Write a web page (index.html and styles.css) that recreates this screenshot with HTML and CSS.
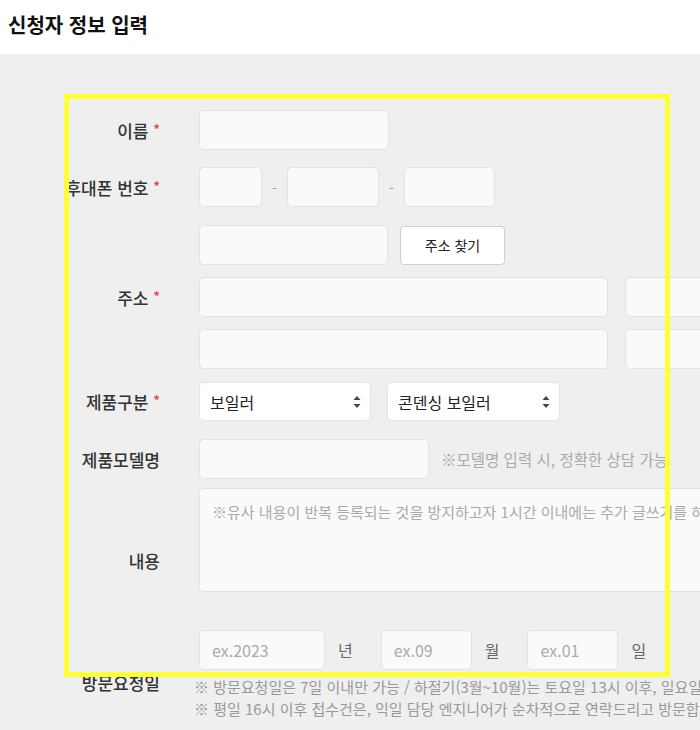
FILE: index.html
```html
<!DOCTYPE html>
<html lang="ko">
<head>
    <meta charset="UTF-8">
    <meta name="viewport" content="width=device-width, initial-scale=1.0">
    <title>신청자 정보 입력</title>
    <link rel="stylesheet" href="styles.css">
</head>
<body>

<div class="page-head">
    <h1>신청자 정보 입력</h1>
</div>

<div class="form-area">
    <div class="form">
        <div class="row row-name">
            <label>이름 <span class="req">*</span></label>
            <div class="field"><input type="text" class="w-name"></div>
        </div>

        <div class="row row-phone">
            <label>후대폰 번호 <span class="req">*</span></label>
            <div class="field">
                <input type="text" class="w-p1">
                <span class="dash">-</span>
                <input type="text" class="w-p2">
                <span class="dash">-</span>
                <input type="text" class="w-p3">
            </div>
        </div>

        <div class="row row-addr">
            <label>주소 <span class="req">*</span></label>
            <div class="field stack">
                <div class="line">
                    <input type="text" class="w-zip">
                    <button type="button" class="btn-find">주소 찾기</button>
                </div>
                <div class="line">
                    <input type="text" class="w-addr">
                    <input type="text" class="w-addr2">
                </div>
                <div class="line">
                    <input type="text" class="w-addr">
                    <input type="text" class="w-addr2">
                </div>
            </div>
        </div>

        <div class="row row-kind">
            <label>제품구분 <span class="req">*</span></label>
            <div class="field">
                <div class="select w-sel1">
                    <span>보일러</span>
                    <svg width="8" height="14" viewBox="0 0 8 14"><path d="M4 1 L7.5 5 H0.5 Z M4 13 L0.5 9 H7.5 Z" fill="#444"/></svg>
                </div>
                <div class="select w-sel2">
                    <span>콘덴싱 보일러</span>
                    <svg width="8" height="14" viewBox="0 0 8 14"><path d="M4 1 L7.5 5 H0.5 Z M4 13 L0.5 9 H7.5 Z" fill="#444"/></svg>
                </div>
            </div>
        </div>

        <div class="row row-model">
            <label>제품모델명</label>
            <div class="field">
                <input type="text" class="w-model">
                <span class="hint">※모델명 입력 시, 정확한 상담 가능</span>
            </div>
        </div>

        <div class="row row-text">
            <label class="lbl-text">내용</label>
            <div class="field">
                <textarea placeholder="※유사 내용이 반복 등록되는 것을 방지하고자 1시간 이내에는 추가 글쓰기를 하실 수 없습니다."></textarea>
            </div>
        </div>

        <div class="row row-date">
            <label class="lbl-date">방문요청일</label>
            <div class="field stack">
                <div class="line date-line">
                    <input type="text" class="w-year" placeholder="ex.2023">
                    <span class="unit">년</span>
                    <input type="text" class="w-md" placeholder="ex.09">
                    <span class="unit">월</span>
                    <input type="text" class="w-md" placeholder="ex.01">
                    <span class="unit">일</span>
                </div>
                <p class="notes">
                    ※ 방문요청일은 7일 이내만 가능 / 하절기(3월~10월)는 토요일 13시 이후, 일요일 및 공휴일 방문 불가<br>
                    ※ 평일 16시 이후 접수건은, 익일 담당 엔지니어가 순차적으로 연락드리고 방문합니다.
                </p>
            </div>
        </div>
    </div>

    <div class="highlight"></div>
</div>

</body>
</html>
```

FILE: styles.css
```css
body {
    margin: 0;
    font-family: "Noto Sans CJK KR", "Noto Sans", sans-serif;
    color: #333;
    background: #efefef;
    overflow: hidden;
}
.page-head {
    background: white;
    height: 54px;
    padding-left: 8px;
}
h1 {
    margin: 0;
    font-size: 20px;
    font-weight: bold;
    line-height: 50px;
    color: #111;
}
.form-area {
    position: relative;
    overflow: hidden;
    height: 676px;
}
.form {
    padding-top: 56px;
    width: 1000px;
}
.row {
    display: grid;
    grid-template-columns: 160px auto;
    column-gap: 39px;
    align-items: center;
}
.row label {
    text-align: right;
    font-size: 17px;
    font-weight: 500;
    color: #333;
    white-space: nowrap;
}
.req {
    color: #e0404f;
    font-size: 14px;
    vertical-align: 3px;
}
.field {
    display: flex;
    align-items: center;
}
.stack {
    flex-direction: column;
    align-items: flex-start;
}
.line {
    display: flex;
    align-items: center;
    gap: 17px;
    margin-bottom: 12px;
}
.line:last-child {
    margin-bottom: 0;
}
input, textarea {
    box-sizing: border-box;
    height: 40px;
    border: 1px solid #e2e2e2;
    border-radius: 5px;
    background: #fafafa;
    font-family: inherit;
    font-size: 16px;
    padding: 0 12px;
    color: #333;
}
input::placeholder, textarea::placeholder {
    color: #aaa;
}
.row-phone { margin-top: 17px; }
.row-addr { margin-top: 18px; }
.row-kind { margin-top: 13px; }
.row-model { margin-top: 18px; }
.row-text { margin-top: 9px; }
.row-date { margin-top: 38px; }

.w-name { width: 190px; }
.w-p1 { width: 63px; }
.w-p2 { width: 92px; }
.w-p3 { width: 91px; }
.dash {
    width: 25px;
    text-align: center;
    color: #999;
    font-size: 13px;
}
.w-zip { width: 189px; }
.btn-find {
    box-sizing: border-box;
    width: 105px;
    height: 39px;
    margin-left: -5px;
    background: white;
    border: 1px solid #cfcfcf;
    border-radius: 4px;
    font-family: inherit;
    font-size: 14px;
    color: #222;
}
.w-addr { width: 409px; }
.w-addr2 { width: 200px; }

.select {
    box-sizing: border-box;
    height: 39px;
    display: flex;
    align-items: center;
    justify-content: space-between;
    padding: 0 9px 0 10px;
    background: white;
    border: 1px solid #e6e6e6;
    border-radius: 5px;
    font-size: 16px;
    color: #222;
}
.w-sel1 { width: 172px; margin-right: 16px; }
.w-sel2 { width: 173px; }

.w-model { width: 230px; }
.hint {
    margin-left: 12px;
    font-size: 15.5px;
    color: #aaa;
}

textarea {
    width: 620px;
    height: 104px;
    padding: 12px;
    font-size: 15px;
    resize: none;
}
.lbl-text {
    padding-top: 40px;
}

.date-line {
    gap: 0;
    margin-bottom: 6px;
}
.unit {
    margin: 0 28px 0 13px;
    font-size: 16px;
    color: #666;
}
.w-year { width: 126px; }
.w-md { width: 91px; }
.lbl-date {
    padding-top: 14px;
}
.notes {
    margin: 0 0 0 -5px;
    font-size: 15px;
    line-height: 22px;
    color: #999;
    white-space: nowrap;
}

.highlight {
    position: absolute;
    left: 64px;
    top: 40px;
    width: 596px;
    height: 573px;
    border: 5px solid #ffff33;
    pointer-events: none;
}
```
